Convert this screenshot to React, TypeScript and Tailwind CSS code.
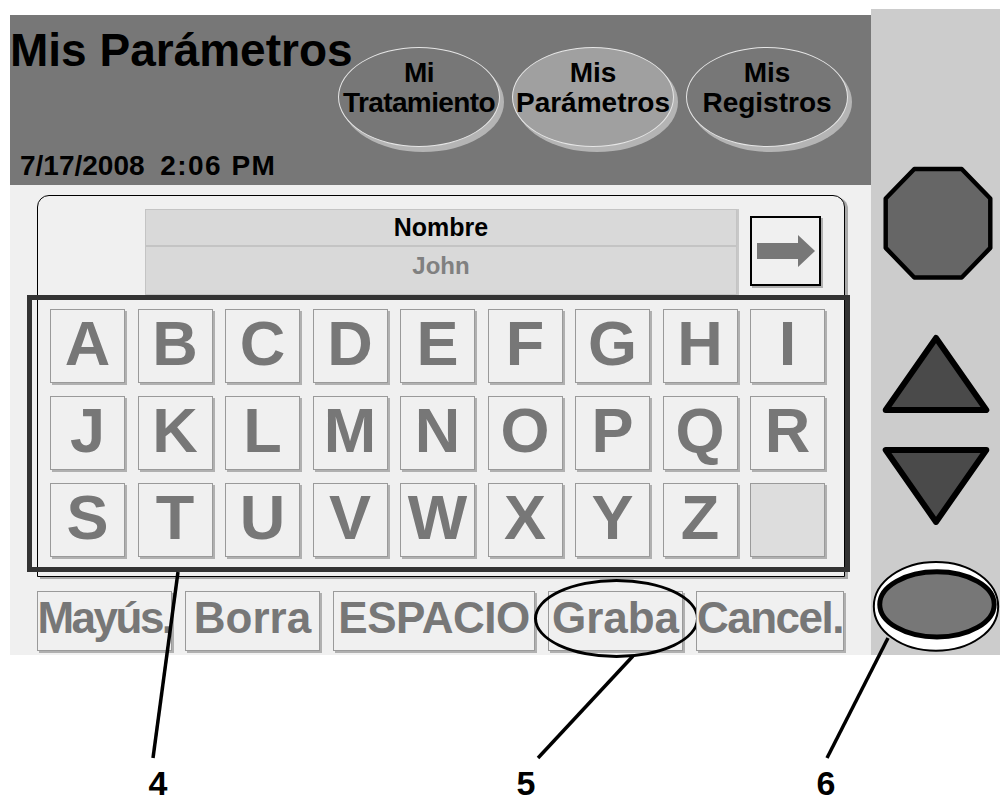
const LETTERS = ["A", "B", "C", "D", "E", "F", "G", "H", "I", "J", "K", "L", "M", "N", "O", "P", "Q", "R", "S", "T", "U", "V", "W", "X", "Y", "Z", ""];

type Tab = { top: string; bottom: string; active?: boolean; tight?: boolean };

const TABS: Tab[] = [
  { top: "Mi", bottom: "Tratamiento", tight: true },
  { top: "Mis", bottom: "Parámetros", active: true },
  { top: "Mis", bottom: "Registros" },
];

type Action = { label: string; width: string; tracking: string; circled?: boolean };

const ACTIONS: Action[] = [
  { label: "Mayús.", width: "w-[135px]", tracking: "tracking-[-2.5px]" },
  { label: "Borra", width: "w-[135px]", tracking: "tracking-normal" },
  { label: "ESPACIO", width: "w-[202px]", tracking: "tracking-[-0.5px]" },
  { label: "Graba", width: "w-[135px]", tracking: "tracking-normal", circled: true },
  { label: "Cancel.", width: "w-[148px]", tracking: "tracking-[-1.5px]" },
];

function TabOval({ tab }: { tab: Tab }) {
  return (
    <div
      className={`flex h-[100px] w-[162px] flex-col items-center justify-center rounded-[50%] border border-[#e6e6e6] pb-[18px] text-[28px] font-bold leading-[30px] text-black shadow-[4px_5px_0_#b4b4b4] ${
        tab.active ? "bg-[#a0a0a0]" : "bg-[#777777]"
      } ${tab.tight ? "tracking-[-0.6px]" : ""}`}
    >
      <span>{tab.top}</span>
      <span>{tab.bottom}</span>
    </div>
  );
}

function Key({ letter }: { letter: string }) {
  return (
    <div
      className={`flex h-[74px] w-[75px] items-center justify-center border border-[#9a9a9a] pb-[6px] text-[63px] font-bold leading-none text-[#777777] shadow-[2px_2px_0_#b0b0b0] ${
        letter ? "bg-[#f0f0f0]" : "bg-[#dddddd]"
      }`}
    >
      {letter}
    </div>
  );
}

function SidePanel() {
  return (
    <div className="mt-[9px] flex h-[646px] w-[129px] flex-col bg-[#cccccc]">
      <svg className="ml-[11px] mt-[157px]" width="112" height="116" viewBox="0 0 112 116">
        <polygon
          points="32,3 80,3 109,33 109,83 80,113 32,113 3,83 3,33"
          fill="#666666"
          stroke="#000"
          strokeWidth="4.5"
          strokeLinejoin="round"
        />
      </svg>
      <svg className="ml-[10px] mt-[53px]" width="112" height="84" viewBox="0 0 112 84">
        <polygon points="55,5 106,78 4,78" fill="#4a4a4a" stroke="#000" strokeWidth="6" strokeLinejoin="round" />
      </svg>
      <svg className="ml-[10px] mt-[30px]" width="112" height="84" viewBox="0 0 112 84">
        <polygon points="4,4 106,4 55,77" fill="#4a4a4a" stroke="#000" strokeWidth="6" strokeLinejoin="round" />
      </svg>
      <svg className="ml-0 mt-[31px]" width="129" height="96" viewBox="0 0 129 96">
        <ellipse cx="65" cy="47" rx="63" ry="45" fill="#fff" stroke="#000" strokeWidth="2" />
        <ellipse cx="66" cy="45" rx="58" ry="33" fill="#777777" stroke="#000" strokeWidth="5" />
      </svg>
    </div>
  );
}

export default function App() {
  return (
    <div className="relative h-[803px] w-[1000px] overflow-hidden bg-white font-['Liberation_Sans',Arial,sans-serif]">
      <div className="flex items-start">
        <div className="ml-[10px] mt-[15px] flex w-[861px] flex-col">
          {/* header */}
          <header className="flex h-[170px] bg-[#777777]">
            <div className="flex w-[328px] flex-col">
              <h1 className="whitespace-nowrap pt-[13px] text-[46px] font-bold leading-[45px] text-black">Mis Parámetros</h1>
              <p className="ml-[10px] mt-[79px] whitespace-pre text-[28px] font-bold leading-[28px] text-black">
                {"7/17/2008  "}
                <span className="tracking-[1.5px]">2:06 PM</span>
              </p>
            </div>
            <nav className="mt-[32px] flex h-[106px] gap-[12px]">
              {TABS.map((tab) => (
                <TabOval key={tab.bottom} tab={tab} />
              ))}
            </nav>
          </header>

          {/* content */}
          <main className="flex h-[470px] flex-col bg-[#f0f0f0] pt-[10px]">
            <section className="ml-[27px] w-[808px] rounded-t-[12px] border border-black bg-[#f0f0f0] pb-[4px] shadow-[3px_2px_0_#a8a8a8]">
              <div className="flex pt-[13px]">
                <div className="ml-[107px] flex h-[86px] w-[592px] flex-col border border-[#c4c4c4] bg-[#d9d9d9] shadow-[2px_0_0_#c8c8c8]">
                  <div className="flex h-[37px] items-center justify-center border-b-2 border-[#c4c4c4] text-[25px] font-bold text-black">
                    Nombre
                  </div>
                  <div className="flex h-[38px] items-center justify-center text-[24px] font-bold text-[#808080]">John</div>
                </div>
                <button className="ml-[13px] mt-[7px] flex h-[70px] w-[71px] items-center justify-center border-2 border-black bg-[#f0f0f0] shadow-[2px_2px_0_#b0b0b0]">
                  <svg width="60" height="34" viewBox="0 0 60 34">
                    <polygon points="1,9 42,9 42,1 59,17 42,33 42,25 1,25" fill="#777777" />
                  </svg>
                </button>
              </div>

              <div className="-ml-[11px] w-[823px] border-[5px] border-[#333333] pb-[10px] pl-[18px] pt-[9px]">
                <div className="grid grid-cols-[repeat(9,75px)] gap-x-[12.5px] gap-y-[13px]">
                  {LETTERS.map((l, i) => (
                    <Key key={i} letter={l} />
                  ))}
                </div>
              </div>
            </section>

            <div className="ml-[27px] mt-[14px] flex gap-[13px]">
              {ACTIONS.map((a) => (
                <div
                  key={a.label}
                  className={`relative flex h-[60px] ${a.width} items-center justify-center overflow-visible border border-[#9a9a9a] bg-[#f0f0f0] shadow-[2px_2px_0_#b0b0b0]`}
                >
                  <span className={`whitespace-nowrap pb-[6px] text-[44px] font-bold leading-none text-[#777777] ${a.tracking}`}>
                    {a.label}
                  </span>
                  {a.circled && (
                    <span className="pointer-events-none absolute -left-[15px] -top-[13px] h-[79px] w-[165px] rounded-[50%] border-[3px] border-black" />
                  )}
                </div>
              ))}
            </div>
          </main>
        </div>

        <SidePanel />
      </div>

      {/* callout labels */}
      <div className="mt-[115px] flex text-[34px] font-bold leading-[26px] text-black">
        <span className="ml-[138px] w-[40px] text-center">4</span>
        <span className="ml-[328px] w-[40px] text-center">5</span>
        <span className="ml-[260px] w-[40px] text-center">6</span>
      </div>

      {/* callout leader lines */}
      <svg className="pointer-events-none absolute left-0 top-0" width="1000" height="803" viewBox="0 0 1000 803">
        <g stroke="#000" strokeWidth="3.5" strokeLinecap="butt">
          <line x1="178" y1="572" x2="153" y2="758" />
          <line x1="633" y1="656" x2="538" y2="758" />
          <line x1="888" y1="638" x2="827" y2="758" />
        </g>
      </svg>
    </div>
  );
}
